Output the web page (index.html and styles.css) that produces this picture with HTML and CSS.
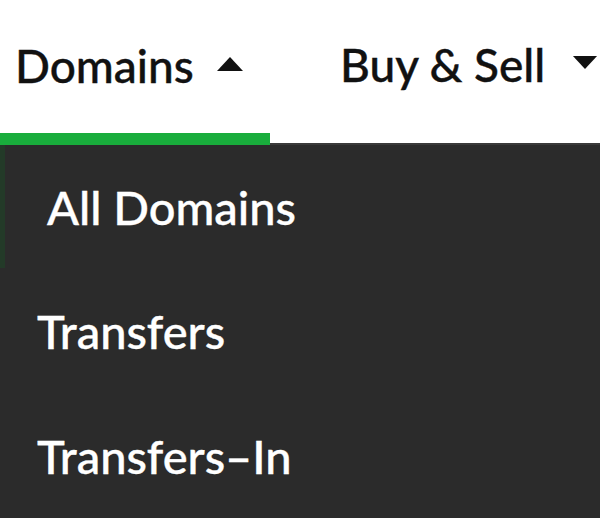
FILE: index.html
```html
<!DOCTYPE html>
<html>
<head>
<meta charset="utf-8">
<link rel="stylesheet" href="styles.css">
</head>
<body>
<nav class="nav">
  <div class="tab tab-active">
    <span class="tab-label">Domains</span>
    <svg class="caret" viewBox="0 0 28 16" width="28" height="16"><polygon points="14,1 27,15 1,15" fill="#111"/></svg>
  </div>
  <div class="tab tab-second">
    <span class="tab-label">Buy &amp; Sell</span>
    <svg class="caret caret-down" viewBox="0 0 28 16" width="26" height="15"><polygon points="1,1 27,1 14,15" fill="#111"/></svg>
  </div>
</nav>
<ul class="menu">
  <li class="item item-active">All Domains</li>
  <li class="item">Transfers</li>
  <li class="item">Transfers–In</li>
</ul>
</body>
</html>
```
FILE: styles.css
```css
html, body {
  margin: 0;
  padding: 0;
}
body {
  width: 600px;
  height: 518px;
  overflow: hidden;
  background: #2b2b2b;
  font-family: "Lato", "Noto Sans", sans-serif;
}
.nav {
  display: flex;
  background: #ffffff;
  height: 145px;
  box-sizing: border-box;
  border-bottom: 2px solid #3a3a3a;
}
.tab {
  display: flex;
  align-items: center;
  box-sizing: border-box;
  height: 143px;
  padding-bottom: 14px;
}
.tab-active {
  width: 270px;
  padding-left: 15px;
  border-bottom: 12px solid #19ad3c;
  height: 145px;
  margin-bottom: -2px;
  padding-bottom: 2px;
}
.tab-second {
  padding-left: 70px;
}
.tab-label {
  font-size: 46px;
  font-weight: 500;
  color: #111;
  -webkit-text-stroke: 0.4px #111;
}
.caret {
  margin-left: 22px;
  margin-top: -4px;
}
.caret-down {
  margin-left: 27px;
}
.menu {
  list-style: none;
  margin: 0;
  padding: 0;
  background: #2b2b2b;
}
.item {
  height: 125px;
  box-sizing: border-box;
  display: flex;
  align-items: center;
  padding-left: 37px;
  color: #ffffff;
  font-size: 47px;
  font-weight: 500;
  -webkit-text-stroke: 0.4px #fff;
}
.item-active {
  height: 123px;
  border-left: 5px solid #233a28;
  padding-left: 42px;
}
```
